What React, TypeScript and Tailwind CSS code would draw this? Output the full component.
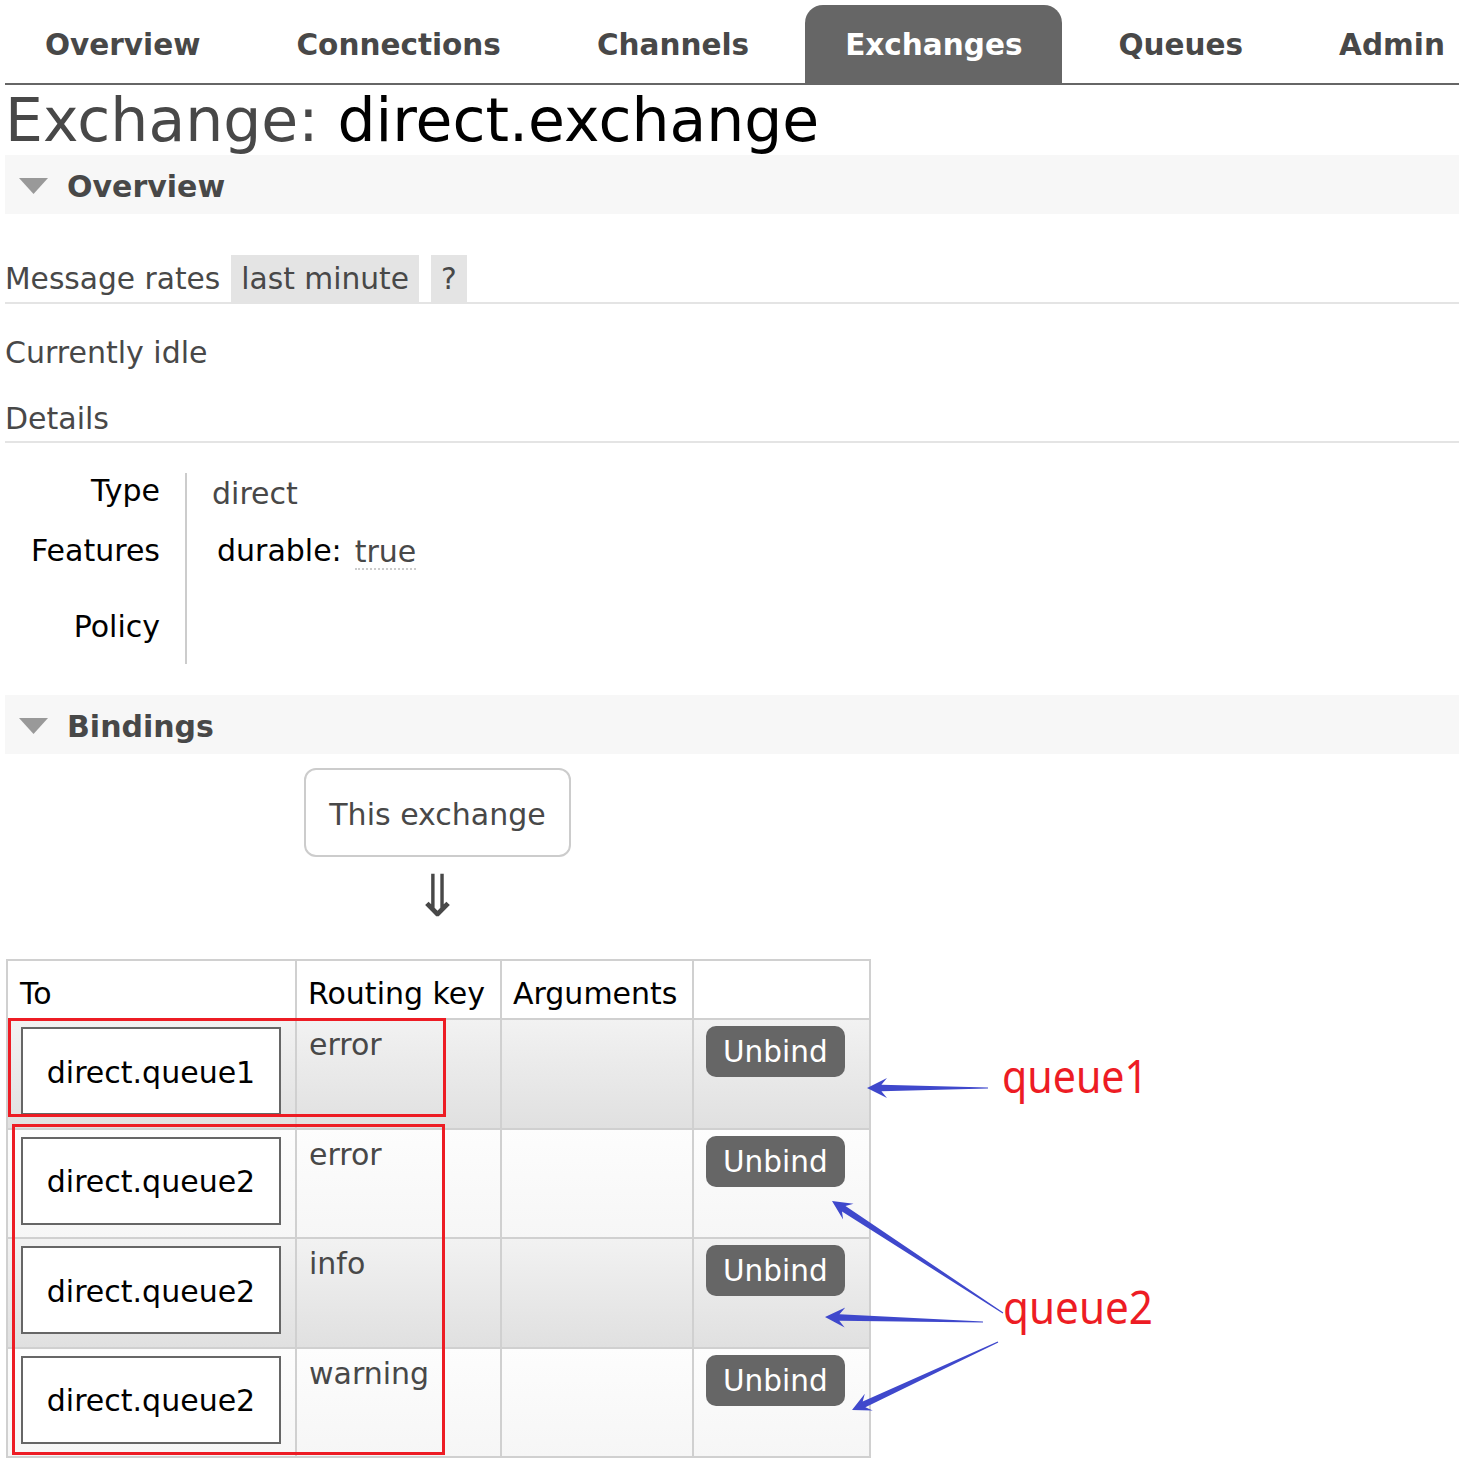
import React from "react";

const tabs = ["Overview", "Connections", "Channels", "Exchanges", "Queues", "Admin"];

function SectionHeader({ title }: { title: string }) {
  return (
    <div className="h-[59px] bg-[#f7f7f7] flex items-center pl-[14px]">
      <svg width="29" height="16" className="mt-[3px]" viewBox="0 0 29 16">
        <polygon points="0,0 29,0 14.5,16" fill="#999999" />
      </svg>
      <span className="ml-[19px] pt-[3px] text-[30px] font-bold text-[#484848]">{title}</span>
    </div>
  );
}

function arrowPoints(tx: number, ty: number, hx: number, hy: number, hl: number, hw: number, sw = 3.2, tw = 0.6) {
  const dx = hx - tx;
  const dy = hy - ty;
  const L = Math.hypot(dx, dy);
  const ux = dx / L;
  const uy = dy / L;
  const nx = -uy;
  const ny = ux;
  const bx = hx - ux * hl * 0.72;
  const by = hy - uy * hl * 0.72;
  const kx = hx - ux * hl;
  const ky = hy - uy * hl;
  const pts = [
    [tx + nx * tw, ty + ny * tw],
    [bx + nx * sw, by + ny * sw],
    [kx + nx * hw, ky + ny * hw],
    [hx, hy],
    [kx - nx * hw, ky - ny * hw],
    [bx - nx * sw, by - ny * sw],
    [tx - nx * tw, ty - ny * tw],
  ];
  return pts.map((p) => `${p[0].toFixed(1)},${p[1].toFixed(1)}`).join(" ");
}

const rows = [
  { to: "direct.queue1", key: "error", alt: true },
  { to: "direct.queue2", key: "error", alt: false },
  { to: "direct.queue2", key: "info", alt: true },
  { to: "direct.queue2", key: "warning", alt: false },
];

export default function App() {
  return (
    <div className="relative w-[1459px] h-[1464px] overflow-hidden bg-white font-['DejaVu_Sans',sans-serif] text-[30px] text-[#484848]">
      <div className="pl-[5px]">
        {/* Tabs */}
        <nav className="flex gap-[16px] pt-[5px] border-b-2 border-[#666666] whitespace-nowrap overflow-hidden">
          {tabs.map((t) => (
            <div
              key={t}
              className={
                t === "Exchanges"
                  ? "shrink-0 h-[78px] px-[40px] pt-[3px] flex items-center text-[29.5px] font-bold bg-[#666666] text-white rounded-t-[18px]"
                  : "shrink-0 h-[78px] px-[40px] pt-[3px] flex items-center text-[29.5px] font-bold text-[#484848]"
              }
            >
              {t}
            </div>
          ))}
        </nav>

        {/* Heading */}
        <h1 className="text-[60px] leading-[70px] font-normal text-[#484848]">
          Exchange: <span className="text-black">direct.exchange</span>
        </h1>

        <SectionHeader title="Overview" />

        {/* Message rates */}
        <div className="mt-[41px] flex border-b-2 border-[#e4e4e4] leading-[46px] text-[29.7px]">
          <span className="pt-[1px]">Message rates</span>
          <span className="ml-[11px] bg-[#e4e4e4] px-[10px] pt-[1px]">last minute</span>
          <span className="ml-[12px] bg-[#e4e4e4] px-[10px] pt-[1px]">?</span>
        </div>

        <div className="mt-[31px] leading-[35px]">Currently idle</div>

        <div className="mt-[31px] leading-[35px] pb-[5px] border-b-2 border-[#e4e4e4]">Details</div>

        {/* Details table */}
        <div className="mt-[30px] flex">
          <div className="w-[182px] pr-[25px] border-r-2 border-[#cccccc] text-right text-black leading-[35px]">
            <div className="h-[60px]">Type</div>
            <div className="h-[76px]">Features</div>
            <div className="h-[55px]">Policy</div>
          </div>
          <div className="pl-[25px] leading-[35px]">
            <div className="h-[60px] pt-[3px]">direct</div>
            <div className="h-[76px] pl-[5px] flex items-start">
              <span className="text-black">durable:</span>
              <span className="ml-[13px] mt-[3px] leading-[32px] border-b-2 border-dotted border-[#cccccc]">true</span>
            </div>
          </div>
        </div>

        <div className="mt-[31px]">
          <SectionHeader title="Bindings" />
        </div>

        {/* This exchange */}
        <div className="mt-[14px] ml-[299px] w-[267px] h-[89px] border-2 border-[#cccccc] rounded-[12px] flex items-center justify-center pt-[3px]">
          This exchange
        </div>
        <div className="ml-[299px] w-[267px] h-[102px] flex justify-center pt-[9px] text-[58px] leading-[60px] text-[#484848]">
          ⇓
        </div>

        {/* Bindings table */}
        <table className="ml-[1px] border-collapse table-fixed w-[863px]">
          <colgroup>
            <col className="w-[289px]" />
            <col className="w-[205px]" />
            <col className="w-[192px]" />
            <col className="w-[177px]" />
          </colgroup>
          <thead>
            <tr>
              <th className="h-[59px] border-2 border-[#d0d0d0] align-bottom text-left font-normal text-black pl-[12px] pb-[7px] leading-[35px]">To</th>
              <th className="h-[59px] border-2 border-[#d0d0d0] align-bottom text-left font-normal text-black pl-[11px] pb-[7px] leading-[35px]">Routing key</th>
              <th className="h-[59px] border-2 border-[#d0d0d0] align-bottom text-left font-normal text-black pl-[11px] pb-[7px] leading-[35px]">Arguments</th>
              <th className="h-[59px] border-2 border-[#d0d0d0]"></th>
            </tr>
          </thead>
          <tbody>
            {rows.map((r, i) => (
              <tr
                key={i}
                className={
                  r.alt
                    ? "h-[109.5px] bg-linear-to-b from-[#f2f2f2] to-[#e0e0e0]"
                    : "h-[109.5px] bg-linear-to-b from-[#fdfdfd] to-[#f6f6f6]"
                }
              >
                <td className="border-2 border-[#d0d0d0] align-top pt-[7px] pl-[13px]">
                  <div className="w-[260px] h-[88px] border-2 border-[#666666] bg-white flex items-center justify-center text-black pt-[2px]">
                    {r.to}
                  </div>
                </td>
                <td className="border-2 border-[#d0d0d0] align-top pt-[7px] pl-[12px] leading-[35px]">{r.key}</td>
                <td className="border-2 border-[#d0d0d0]"></td>
                <td className="border-2 border-[#d0d0d0] align-top pt-[6px] pl-[12px]">
                  <span className="inline-block h-[51px] leading-[53px] px-[17px] rounded-[10px] bg-[#666666] text-white text-[29.5px]">
                    Unbind
                  </span>
                </td>
              </tr>
            ))}
          </tbody>
        </table>
      </div>

      {/* Annotations overlay */}
      <svg className="absolute left-0 top-0 pointer-events-none" width="1459" height="1464" viewBox="0 0 1459 1464">
        <rect x="9.5" y="1019.5" width="435" height="96" fill="none" stroke="#ed1c24" strokeWidth="3" />
        <rect x="13.5" y="1125.5" width="430" height="328" fill="none" stroke="#ed1c24" strokeWidth="3" />
        <polygon points={arrowPoints(988, 1088, 867, 1088, 20, 10)} fill="#3f48cc" />
        <polygon points={arrowPoints(1003, 1313, 832, 1201, 19.5, 9.5)} fill="#3f48cc" />
        <polygon points={arrowPoints(983, 1322, 825, 1317, 20, 10)} fill="#3f48cc" />
        <polygon points={arrowPoints(998, 1342, 852, 1410, 18.5, 9.3)} fill="#3f48cc" />
        <text x="1002" y="1093" fontSize="45" fill="#ed1c24" fontFamily="'Noto Sans', sans-serif" textLength="146" lengthAdjust="spacingAndGlyphs">
          queue1
        </text>
        <text x="1003" y="1324" fontSize="45" fill="#ed1c24" fontFamily="'Noto Sans', sans-serif" textLength="150" lengthAdjust="spacingAndGlyphs">
          queue2
        </text>
      </svg>
    </div>
  );
}
